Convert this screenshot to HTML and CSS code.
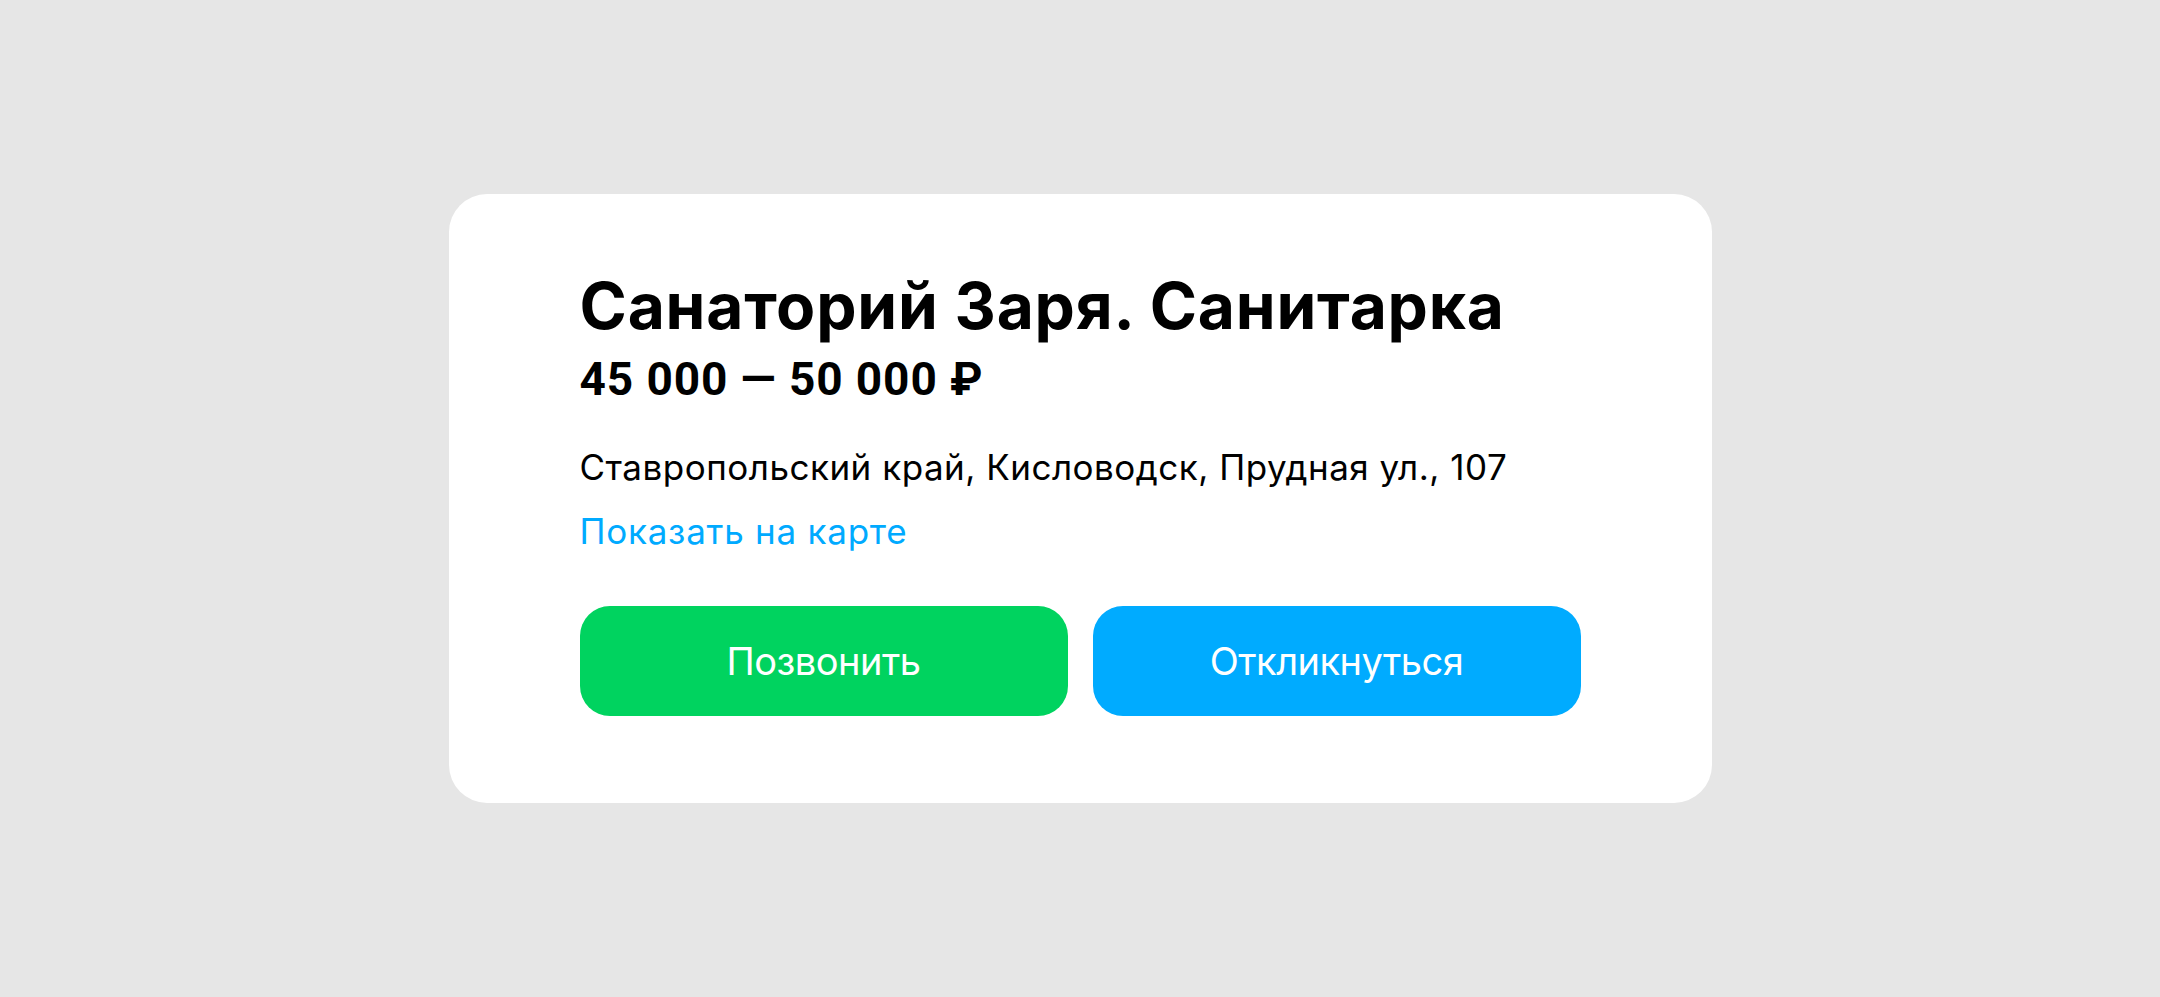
FILE: index.html
```html
<!DOCTYPE html>
<html lang="ru">
<head>
<meta charset="utf-8">
<title>Вакансия</title>
<link rel="stylesheet" href="styles.css">
</head>
<body>
<main class="page">
  <section class="card">
    <h1 class="title">Санаторий Заря. Санитарка</h1>
    <div class="salary">45 000 — 50 000 ₽</div>
    <p class="address">Ставропольский край, Кисловодск, Прудная ул., 107</p>
    <a class="map-link" href="#">Показать на карте</a>
    <div class="actions">
      <button class="btn btn-call" type="button">Позвонить</button>
      <button class="btn btn-respond" type="button">Откликнуться</button>
    </div>
  </section>
</main>
</body>
</html>
```
FILE: styles.css
```css
* { box-sizing: border-box; }
html, body { margin: 0; padding: 0; }
body {
  background: #e6e6e6;
  font-family: Inter, "Noto Sans", "Liberation Sans", sans-serif;
  color: #000;
}
.page {
  min-height: 997px;
  display: flex;
  align-items: center;
  justify-content: center;
}
.card {
  width: 1263px;
  background: #fff;
  border-radius: 38px;
  padding: 80px 131px 87px;
  display: flex;
  flex-direction: column;
}
.title {
  margin: 0;
  font-size: 64px;
  line-height: 64px;
  font-weight: 700;
  letter-spacing: 0.8px;
}
.salary {
  margin-top: 14px;
  font-family: Roboto, Inter, "Liberation Sans", sans-serif;
  font-size: 46px;
  line-height: 54px;
  font-weight: 700;
  letter-spacing: 0.9px;
}
.address {
  margin: 29px 0 0;
  font-size: 35px;
  line-height: 64px;
  font-weight: 400;
  letter-spacing: 0.5px;
}
.map-link {
  font-size: 35px;
  line-height: 64px;
  color: #00aaff;
  text-decoration: none;
  align-self: flex-start;
  letter-spacing: 0.75px;
}
.actions {
  margin-top: 43px;
  display: grid;
  grid-template-columns: 1fr 1fr;
  gap: 25px;
}
.btn {
  height: 110px;
  border: 0;
  border-radius: 30px;
  font-family: inherit;
  font-size: 38px;
  font-weight: 400;
  color: #fff;
  letter-spacing: -0.5px;
  cursor: pointer;
}
.btn-call { background: #00d35f; }
.btn-respond { background: #00abff; }
```
